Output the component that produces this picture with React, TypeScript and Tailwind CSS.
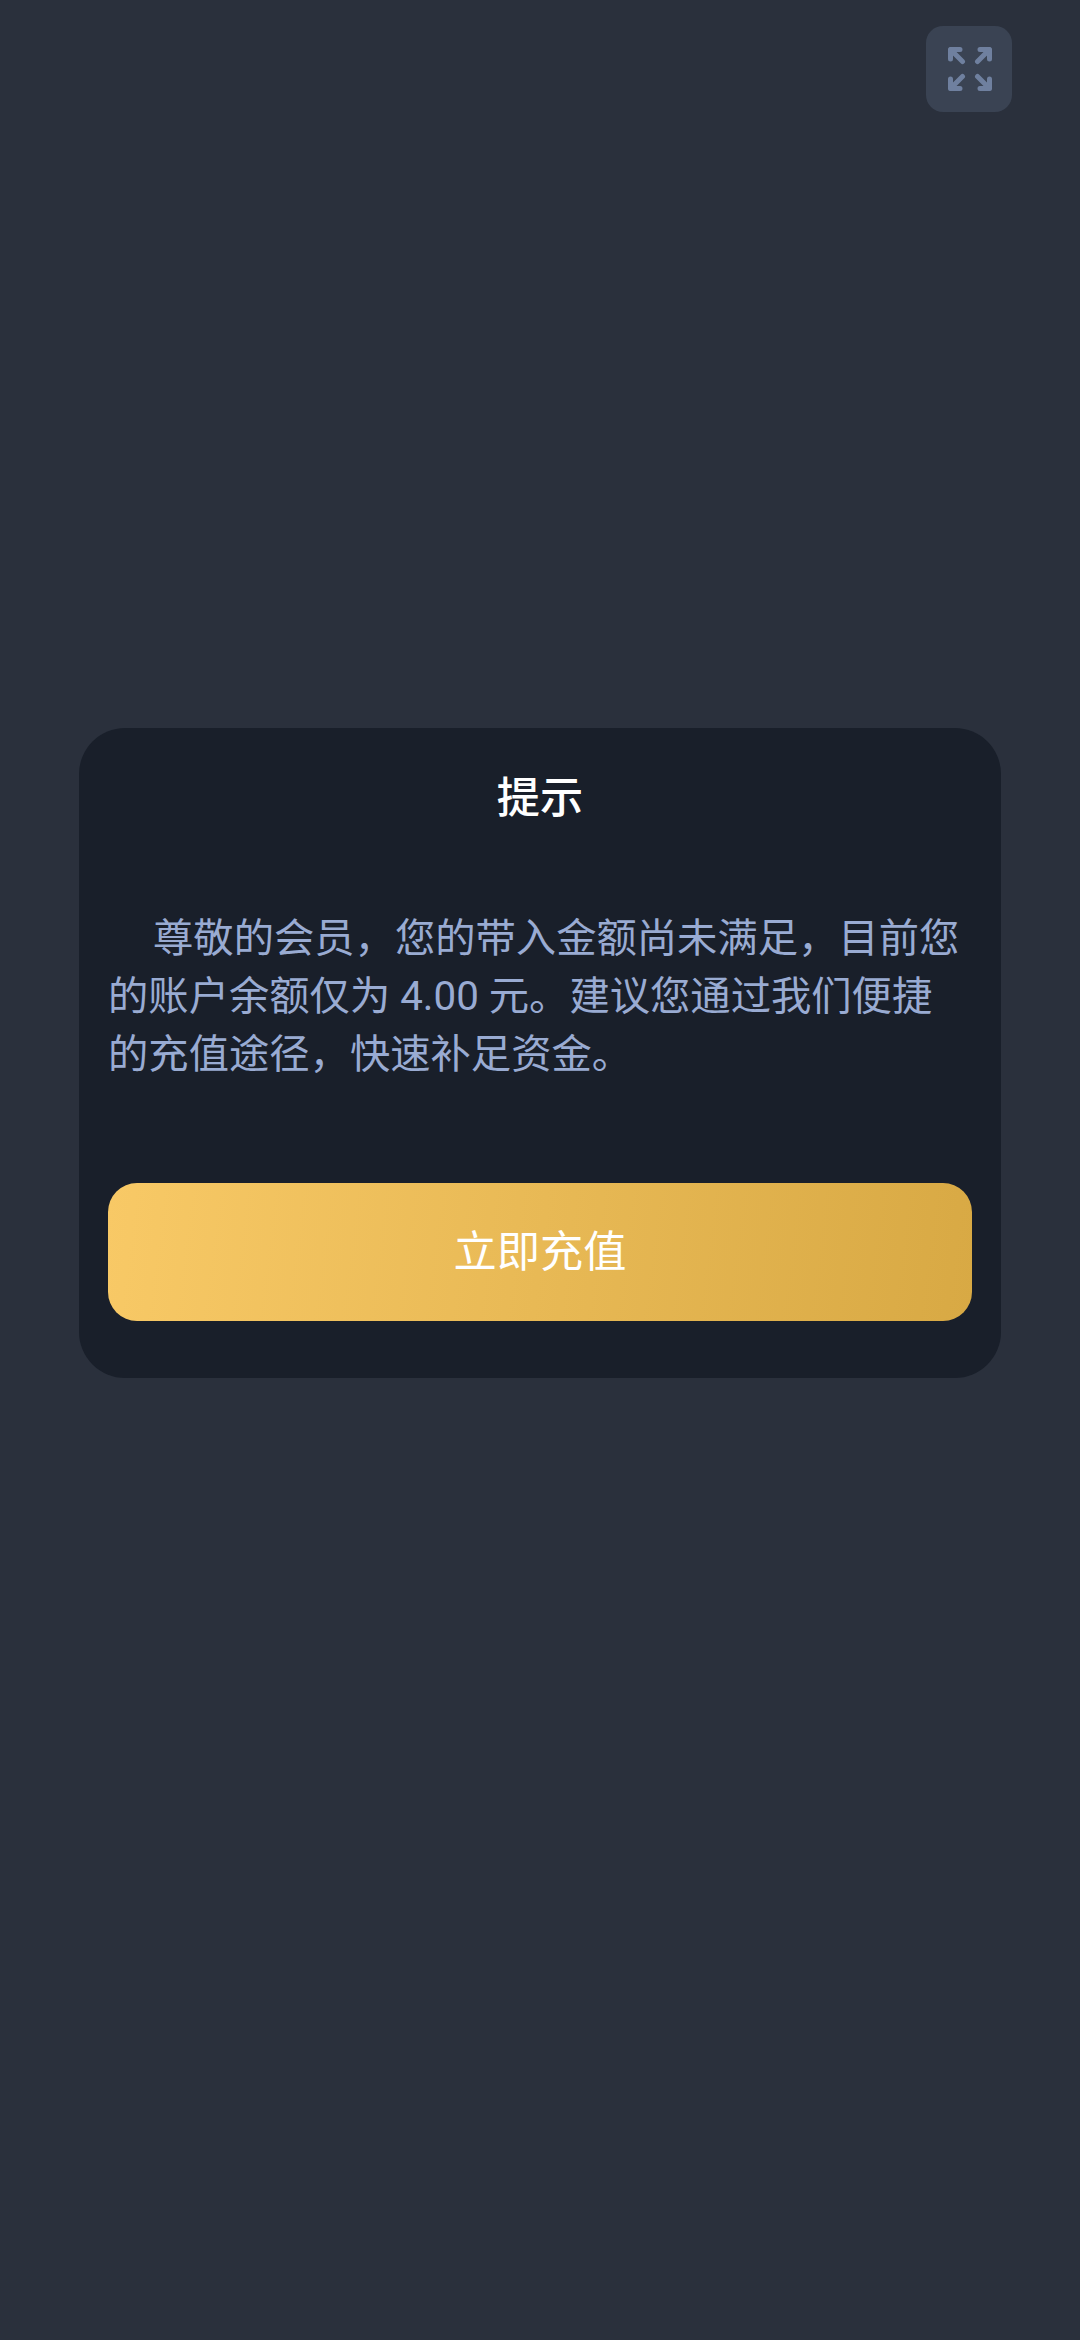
type ExpandButtonProps = {
  onClick?: () => void
}

function ExpandButton({ onClick }: ExpandButtonProps) {
  return (
    <button
      type="button"
      aria-label="全屏"
      onClick={onClick}
      className="flex h-[86px] w-[86px] items-center justify-center rounded-[17px] bg-[#3a4353] pl-[2px]"
    >
      <svg
        width="44"
        height="44"
        viewBox="0 0 44 44"
        fill="none"
        stroke="#6f809f"
        strokeWidth="5"
        strokeLinecap="round"
        strokeLinejoin="round"
      >
        <path d="M2.5 12V2.5H12M2.5 2.5L14.5 14.5" />
        <path d="M32 2.5H41.5V12M41.5 2.5L29.5 14.5" />
        <path d="M2.5 32V41.5H12M2.5 41.5L14.5 29.5" />
        <path d="M32 41.5H41.5V32M41.5 41.5L29.5 29.5" />
      </svg>
    </button>
  )
}

export default function App() {
  const balance = 4

  return (
    <div className="flex h-[2340px] w-[1080px] flex-col bg-[#2a303c] font-[Roboto,'Noto_Sans_CJK_SC',sans-serif]">
      {/* Top bar */}
      <div className="flex justify-end pt-[26px] pr-[68px]">
        <ExpandButton />
      </div>

      {/* Dialog */}
      <div
        role="dialog"
        className="mx-[79px] mt-[616px] flex h-[650px] flex-col rounded-[46px] bg-[#191f2a] px-[29px]"
      >
        <h2 className="mt-[40px] text-center text-[43.2px] leading-[62px] font-medium text-white">提示</h2>

        <p className="mt-[80px] h-[174px] indent-[45px] text-[40.32px] leading-[58px] whitespace-nowrap text-[#99abd2]">
          尊敬的会员，您的带入金额尚未满足，目前您
          <br />
          的账户余额仅为 {balance.toFixed(2)} 元。建议您通过我们便捷
          <br />
          的充值途径，快速补足资金。
        </p>

        <button
          type="button"
          className="mt-[99px] h-[138px] rounded-[29px] bg-[linear-gradient(97deg,#f8c966_0%,#d8a944_100%)] pt-[2px] text-[43.2px] leading-none text-white"
        >
          立即充值
        </button>
      </div>
    </div>
  )
}
